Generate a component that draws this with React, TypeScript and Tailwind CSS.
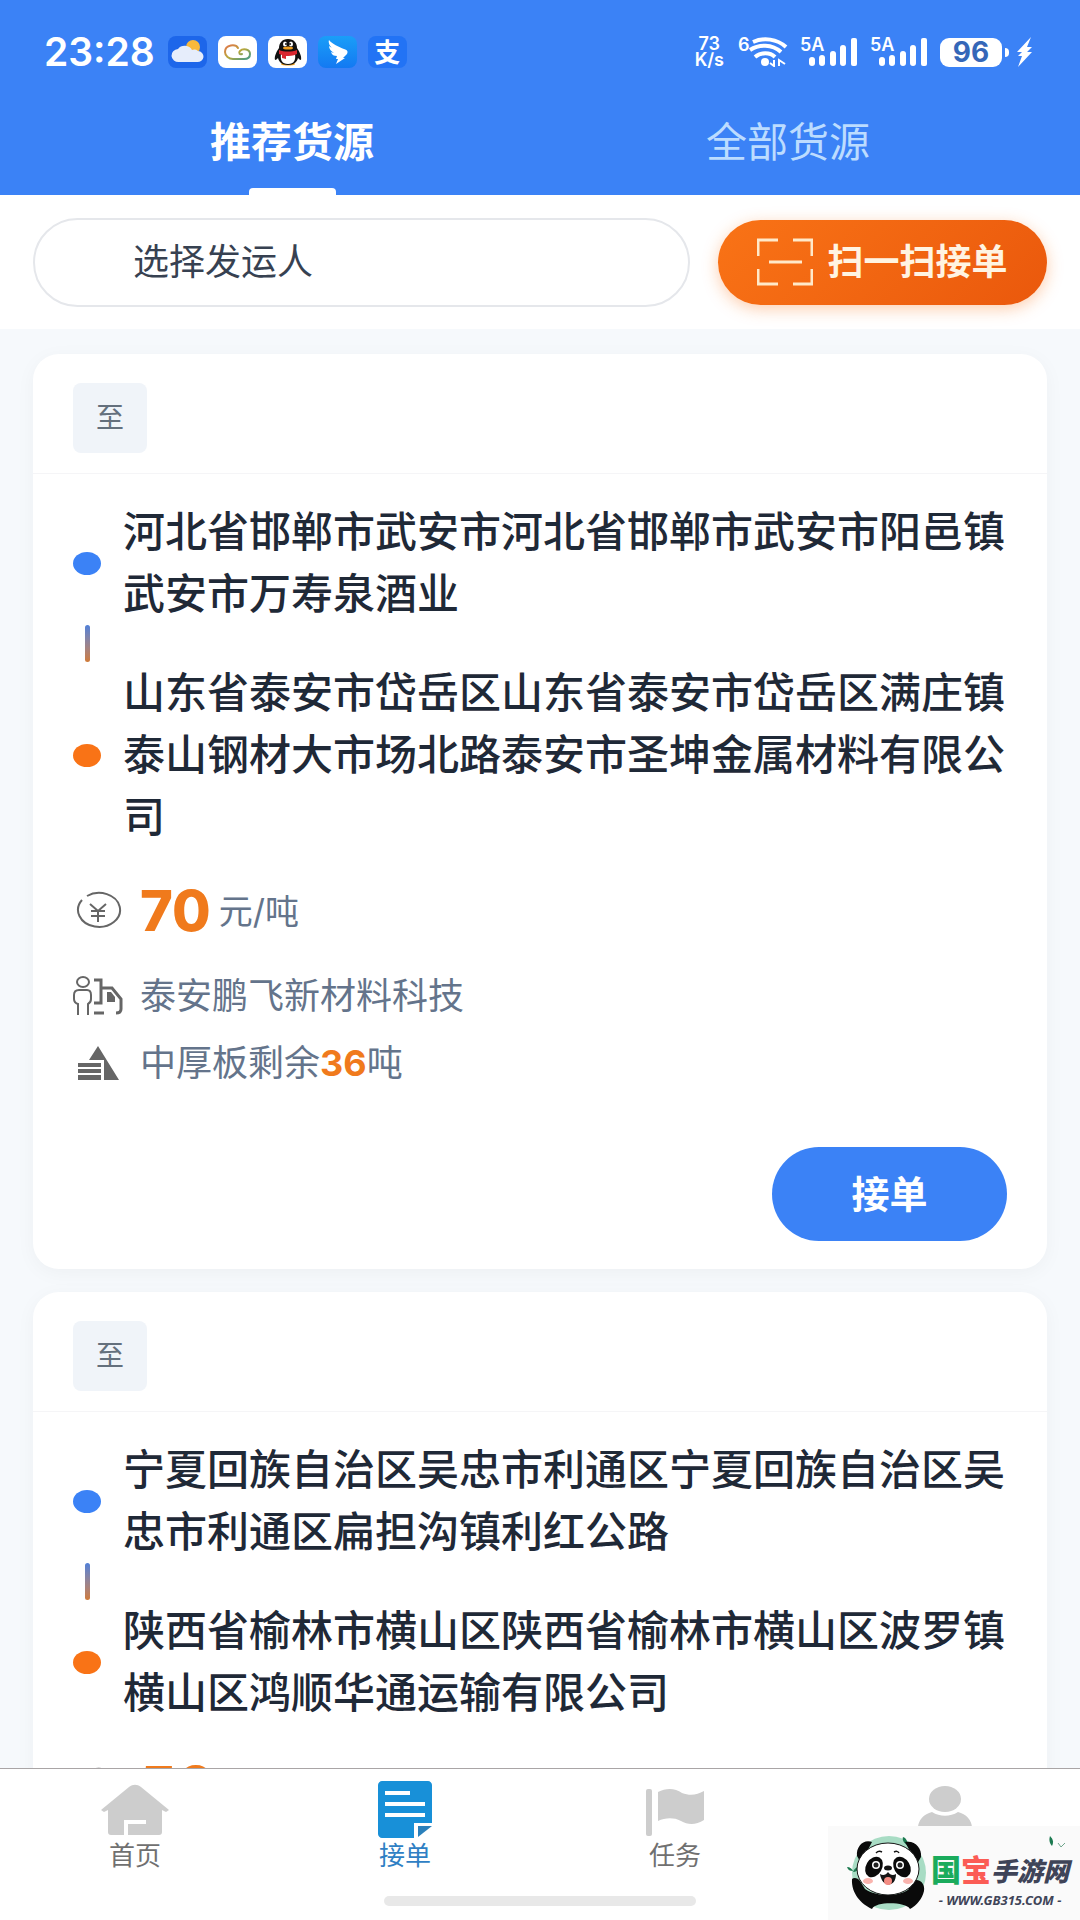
import type { ReactNode } from "react";

type Cargo = {
  id: number;
  from: string;
  to: string;
  price: number;
  company: string;
  goods: string;
  left: number;
};

const cargos: Cargo[] = [
  {
    id: 1,
    from: "河北省邯郸市武安市河北省邯郸市武安市阳邑镇武安市万寿泉酒业",
    to: "山东省泰安市岱岳区山东省泰安市岱岳区满庄镇泰山钢材大市场北路泰安市圣坤金属材料有限公司",
    price: 70,
    company: "泰安鹏飞新材料科技",
    goods: "中厚板",
    left: 36,
  },
  {
    id: 2,
    from: "宁夏回族自治区吴忠市利通区宁夏回族自治区吴忠市利通区扁担沟镇利红公路",
    to: "陕西省榆林市横山区陕西省榆林市横山区波罗镇横山区鸿顺华通运输有限公司",
    price: 50,
    company: "",
    goods: "",
    left: 0,
  },
];

/* ---------- status bar ---------- */

function WeatherIcon() {
  return (
    <svg width="39" height="32" viewBox="0 0 39 32">
      <rect width="39" height="32" rx="8" fill="#1d66ea" />
      <circle cx="25" cy="11" r="7" fill="#f8b93c" />
      <path d="M11 26a7 6.500 0 0 1-1-13 8 7 0 0 1 14 1 6 6 0 0 1 6 1 6 5.500 0 0 1-1 11z" fill="#e6edfb" />
    </svg>
  );
}

function CloudIcon() {
  return (
    <svg width="39" height="32" viewBox="0 0 39 32" fill="none">
      <defs>
        <linearGradient id="cloud" x1="0" y1="0" x2="1" y2="1">
          <stop offset="0" stopColor="#e0764a" />
          <stop offset="0.5" stopColor="#b9a83c" />
          <stop offset="1" stopColor="#3f9a8c" />
        </linearGradient>
      </defs>
      <rect width="39" height="32" rx="8" fill="#fff" />
      <path d="M20 12c-2-4-13-4-13 4 0 4 4 7 8 7h11c4 0 6-2 6-5 0-5-7-6-10-3-2 2 0 4 2 3" stroke="url(#cloud)" strokeWidth="2" strokeLinecap="round" />
    </svg>
  );
}

function PenguinIcon() {
  return (
    <svg width="39" height="32" viewBox="0 0 39 32">
      <rect width="39" height="32" rx="8" fill="#fff" />
      <path d="M13 28c0-2 14-2 14 0 0 2-14 2-14 0z" fill="#f0a020" />
      <path d="M20 3c-6 0-9 4-9 9-2 3-5 8-4 12 1 0 2-1 3-2 1 4 4 7 10 7s9-3 10-7c1 1 2 2 3 2 1-4-2-9-4-12 0-5-3-9-9-9z" fill="#111" />
      <path d="M13 18c-1 6 1 10 7 10s8-4 7-10z" fill="#fff" />
      <path d="M11 14c5 2 13 2 18 0v4c-4 2-8 2-11 2v3l-4-1v-3l-3-1z" fill="#d9262f" />
      <ellipse cx="17" cy="8" rx="2" ry="2.500" fill="#fff" />
      <ellipse cx="23" cy="8" rx="2" ry="2.500" fill="#fff" />
      <circle cx="18" cy="8" r="1" fill="#111" />
      <circle cx="22" cy="8" r="1" fill="#111" />
      <ellipse cx="20" cy="12" rx="5" ry="1.500" fill="#f0a020" />
    </svg>
  );
}

function WingIcon() {
  return (
    <svg width="39" height="32" viewBox="0 0 39 32">
      <defs>
        <linearGradient id="wing" x1="0" y1="0" x2="0" y2="1">
          <stop offset="0" stopColor="#1a9ef8" />
          <stop offset="1" stopColor="#1379f2" />
        </linearGradient>
      </defs>
      <rect width="39" height="32" rx="8" fill="url(#wing)" />
      <path d="M11 4c3 4 10 7 15 9 4 1 4 3 3 5l-4 4h2l-9 6 2-5h-2l1-3c-3 0-5-1-6-4l3 1c-3-2-5-4-5-7l3 2c-2-2-4-5-3-8z" fill="#fff" />
    </svg>
  );
}

function Wifi() {
  return (
    <span className="relative flex">
      <span className="absolute top-0 left-0 text-lg leading-4 font-semibold">6</span>
      <svg width="50" height="30" viewBox="0 0 50 30" fill="none" stroke="#fff" strokeWidth="4">
        <path d="M15 5c11-5 24-3 33 5" />
        <path d="M12 13c9-6 22-6 31 2" />
        <path d="M17 20c6-5 15-5 20 0" />
        <circle cx="27" cy="25" r="4" fill="#fff" stroke="none" />
        <path d="M36 23v6l-4-3M41 29v-6l6 4" strokeWidth="2" />
      </svg>
    </span>
  );
}

function Signal() {
  return (
    <span className="relative flex">
      <span className="absolute top-0 left-0 text-lg leading-4 font-semibold">5A</span>
      <svg width="58" height="30" viewBox="0 0 58 30" fill="#fff">
        <rect x="9" y="20" width="6" height="9" rx="3" />
        <rect x="19" y="18" width="6" height="11" rx="3" />
        <rect x="30" y="14" width="6" height="15" rx="3" />
        <rect x="40" y="8" width="6" height="21" rx="3" />
        <rect x="51" y="1" width="6" height="28" rx="2" />
      </svg>
    </span>
  );
}

function StatusBar() {
  return (
    <div className="flex h-[104px] items-center justify-between pl-11 pr-[46px] text-white">
      <div className="flex items-center gap-[11px]">
        <span className="mr-0.5 text-[39px] leading-10 font-semibold">23:28</span>
        <WeatherIcon />
        <CloudIcon />
        <PenguinIcon />
        <WingIcon />
        <span className="flex h-8 w-[39px] items-center justify-center rounded-lg bg-[#2273f5] text-[26px] font-bold">支</span>
      </div>
      <div className="flex items-center gap-3">
        <span className="mr-0.5 flex flex-col text-center text-lg leading-4 font-semibold">
          <span>73</span>
          <span>K/s</span>
        </span>
        <Wifi />
        <Signal />
        <Signal />
        <span className="flex items-center gap-[3px]">
          <span className="flex h-[29px] w-[62px] items-center justify-center rounded-[9px] bg-white text-[28px] font-bold text-[#3567b8]">96</span>
          <span className="h-[9px] w-1 rounded-r bg-white" />
          <svg className="ml-1" width="18" height="30" viewBox="0 0 18 30" fill="#fff">
            <path d="M15 0 1 15h5l-4 4h4L2 30l14-15h-5l5-5h-5z" />
          </svg>
        </span>
      </div>
    </div>
  );
}

/* ---------- card icons ---------- */

function YenIcon() {
  return (
    <svg width="50" height="42" viewBox="0 0 50 42" fill="none" stroke="#666" strokeWidth="2">
      <path d="M14 6a21 17 0 1 1-5 4" />
      <path d="m17 14 8 7 8-7M25 21v11M18 21h14M18 26h14" />
    </svg>
  );
}

function DriverIcon() {
  return (
    <svg width="50" height="42" viewBox="0 0 50 42" fill="none" stroke="#666" strokeWidth="2">
      <ellipse cx="10" cy="7" rx="6" ry="5" />
      <path d="M5 40V29c-3-1-4-2-4-5v-4c0-3 2-5 5-5h8c3 0 4 2 4 5v4c0 3-1 4-3 5v11" />
      <path d="M21 5h7v23h-7" strokeWidth="3" />
      <path d="M29 13h10l9 11v10c0 3-2 4-5 4M21 38h10" strokeWidth="3" />
      <path d="M34 17h4l4 5v5h-8z" fill="#666" stroke="none" />
    </svg>
  );
}

function GoodsIcon() {
  return (
    <svg width="50" height="42" viewBox="0 0 50 42" fill="#666">
      <path d="M25 4 46 38H31V18H16z" />
      <path d="M5 21h23v4H5zM5 27h23v4H5zM5 33h23v5H5z" />
    </svg>
  );
}

function ScanIcon() {
  return (
    <svg width="56" height="48" viewBox="0 0 56 48" fill="none" stroke="#ffe9c9" strokeWidth="3">
      <path d="M1 18V2h20M36 2h19v16M55 31v15H36M21 46H1V31M12 24h33" />
    </svg>
  );
}

/* ---------- cargo card ---------- */

function Stop({ text, dot }: { text: string; dot: string }) {
  return (
    <li className="flex items-center gap-[22px]">
      <span className={`h-[23px] w-7 shrink-0 rounded-[50%] ${dot}`} />
      <p className="flex-1 text-[42px] leading-[62px] font-medium break-all text-[#1f2937]">{text}</p>
    </li>
  );
}

function CargoCard({ cargo }: { cargo: Cargo }) {
  return (
    <article className="shrink-0 rounded-[26px] bg-white shadow-[0_4px_20px_rgba(0,0,0,0.04)]">
      <header className="flex border-b border-[#f5f5f7] px-10 pt-[29px] pb-5">
        <span className="flex h-[70px] w-[74px] items-center justify-center rounded-lg bg-[#f0f4f9] text-[28px] text-[#64707d]">至</span>
      </header>

      <div className="px-10 pt-[27px] pb-7">
        <ul className="-mr-2">
          <Stop text={cargo.from} dot="bg-[#3b82f6]" />
          <li className="flex w-7 justify-center">
            <span className="h-[37px] w-[5px] rounded-sm bg-linear-to-b from-[#4f7fd8] to-[#d07a35]" />
          </li>
          <Stop text={cargo.to} dot="bg-[#f97316]" />
        </ul>

        <div className="mt-[31px] flex h-16 items-center gap-[17px]">
          <YenIcon />
          <p className="flex items-center gap-2">
            <strong className="text-[56px] leading-16 font-extrabold text-[#f07a1c]">{cargo.price}</strong>
            <span className="text-[34px] text-[#64748b]">元/吨</span>
          </p>
        </div>

        <div className="mt-7 flex h-[50px] items-center gap-[17px] text-4xl text-[#64748b]">
          <DriverIcon />
          <span>{cargo.company}</span>
        </div>
        <div className="mt-[17px] flex h-[50px] items-center gap-[17px] text-4xl text-[#64748b]">
          <GoodsIcon />
          <span>
            {cargo.goods}剩余<strong className="font-bold text-[#f07a1c]">{cargo.left}</strong>吨
          </span>
        </div>

        <div className="mt-[59px] flex justify-end">
          <button className="h-[94px] w-[235px] rounded-full bg-[#3b82f6] text-[38px] font-bold text-white">接单</button>
        </div>
      </div>
    </article>
  );
}

/* ---------- bottom bar ---------- */

function NavItem({ label, active, children }: { label: string; active?: boolean; children: ReactNode }) {
  return (
    <a href="#" className="flex flex-1 flex-col items-center gap-px pt-3">
      {children}
      <span className={`text-[26px] leading-8 ${active ? "text-[#2f7fc4]" : "text-[#707070]"}`}>{label}</span>
    </a>
  );
}

function BottomNav() {
  return (
    <nav className="shrink-0 border-t border-[#a9a5a6] bg-white">
      <div className="flex">
        <NavItem label="首页">
          <svg width="68" height="58" viewBox="0 0 68 58" fill="#cdcdcd">
            <path d="M28 6c4-3 8-3 12 0l28 23-3 2-4-2v22c0 2-1 3-3 3H27V43h18v-4H23v15H10c-2 0-3-1-3-3V29l-4 2-3-2z" />
          </svg>
        </NavItem>
        <NavItem label="接单" active>
          <svg width="54" height="58" viewBox="0 0 54 58" fill="#1890d8">
            <path d="M4 0h46c2 0 4 2 4 4v38H36v15H4c-2 0-4-2-4-4V4c0-2 2-4 4-4z" />
            <path d="M40 45h14L40 56z" fill="#2b80bb" />
            <path d="M7 10h25v4H7zM7 21h40v4H7zM7 32h40v4H7z" fill="#fff" />
          </svg>
        </NavItem>
        <NavItem label="任务">
          <svg width="58" height="58" viewBox="0 0 58 58" fill="#cdcdcd">
            <rect x="0" y="8" width="6" height="47" rx="2" />
            <path d="M12 11c8-4 17-4 24 1 8 3 15 2 22-2v29c-8 5-16 5-23 1-8-4-16-3-23 0z" />
          </svg>
        </NavItem>
        <a href="#" aria-label="我的" className="flex flex-1 flex-col items-center pt-3">
          <svg width="54" height="58" viewBox="0 0 54 58" fill="#cdcdcd">
            <ellipse cx="27" cy="18" rx="16" ry="13" />
            <path d="M14 31c8 5 18 5 26 0 8 2 14 8 14 16v8H0v-8c0-8 6-14 14-16z" />
          </svg>
        </a>
      </div>
      <div className="flex justify-center pt-6 pb-3.5">
        <span className="h-2.5 w-[312px] rounded-full bg-[#e8e8e8]" />
      </div>
    </nav>
  );
}

function Panda() {
  return (
    <svg className="shrink-0" width="80" height="76" viewBox="0 0 80 76">
      <circle cx="42" cy="38" r="37" fill="#a8dcc4" />
      <path d="M56 2c3 1 5 4 4 8-3-2-5-5-4-8zM0 32c3 0 5 2 6 4-3 0-5-1-6-4zM6 37c1-3 3-5 6-5-1 3-3 5-6 5z" fill="#1c7a50" />
      <path d="M5 44c2-2 6-1 8 2l5 8c12 8 34 8 44 0 0-5 3-9 8-9 5 1 8 5 7 11-2 8-7 14-14 18-4-7-34-8-38 0C14 69 4 58 5 44z" fill="#0a0a0a" />
      <path d="M10 21C9 12 16 4 25 7L14 28zM74 22C75 13 68 5 58 7l12 22z" fill="#0a0a0a" />
      <ellipse cx="41" cy="34" rx="31" ry="26" fill="#fff" stroke="#151515" />
      <ellipse cx="27" cy="32" rx="8" ry="11" transform="rotate(30 27 32)" fill="#0a0a0a" />
      <ellipse cx="55" cy="32" rx="8" ry="11" transform="rotate(-30 55 32)" fill="#0a0a0a" />
      <circle cx="29" cy="30" r="4" fill="#fff" />
      <circle cx="53" cy="30" r="4" fill="#fff" />
      <circle cx="29" cy="30" r="2.500" fill="#222" />
      <circle cx="53" cy="30" r="2.500" fill="#222" />
      <path d="M29 18c2-2 4-2 6-1M47 17c2-1 4-1 5 1" stroke="#151515" strokeWidth="1.500" fill="none" />
      <ellipse cx="41" cy="33" rx="4" ry="2.500" fill="#151515" />
      <path d="M33 39c3 2 6 1 8-2 2 3 5 4 8 2 0 14-14 14-16 0z" fill="#151515" />
      <ellipse cx="41" cy="46" rx="4" ry="4" fill="#f28b82" />
      <ellipse cx="21" cy="46" rx="5" ry="3" fill="#f9b4ae" />
      <ellipse cx="61" cy="46" rx="5" ry="3" fill="#f9b4ae" />
    </svg>
  );
}

function SiteBadge() {
  return (
    <div className="absolute right-0 bottom-0 flex h-[94px] w-[252px] items-center bg-[#fafafa] pl-[19px]">
      <Panda />
      <div className="relative ml-1 flex flex-col items-center pt-4">
        <svg className="absolute top-0 right-1" width="16" height="12" viewBox="0 0 16 12">
          <path d="M1 0c3 3 4 6 2 10C0 7 0 3 1 0z" fill="#1c7a50" />
          <path d="M9 7l3 4 4-4" stroke="#6fa58c" fill="none" />
        </svg>
        <p className="flex items-baseline leading-9 font-black whitespace-nowrap">
          <span className="text-[30px] text-[#1aab5c]">国</span>
          <span className="text-[30px] text-[#fb5c55]">宝</span>
          <span className="text-[26px] text-[#3f4458] italic">手游网</span>
        </p>
        <p className="font-['Noto_Sans',sans-serif] text-[13px] leading-5 font-bold whitespace-nowrap text-[#3f4458] italic">- WWW.GB315.COM -</p>
      </div>
    </div>
  );
}

export default function App() {
  return (
    <div className="relative flex h-screen flex-col overflow-hidden bg-[#f6f9fc] font-['Inter','Noto_Sans_CJK_SC',sans-serif]">
      <div className="shrink-0 bg-[#3b82f6]">
        <StatusBar />
        <div className="flex h-[91px] px-11">
          <button className="flex flex-1 flex-col items-center justify-between text-[41px] font-bold text-white">
            <span className="leading-[76px]">推荐货源</span>
            <span className="h-[7px] w-[87px] rounded-t bg-white" />
          </button>
          <button className="flex flex-1 flex-col items-center text-[41px] text-[#bcdcff]">
            <span className="leading-[76px]">全部货源</span>
          </button>
        </div>
      </div>

      <div className="flex h-[134px] shrink-0 items-center gap-7 bg-white px-[33px]">
        <select aria-label="选择发运人" className="h-[89px] min-w-0 flex-1 appearance-none rounded-full border-2 border-[#e5e7eb] bg-white pl-[98px] text-4xl text-[#374151]">
          <option>选择发运人</option>
        </select>
        <button className="flex h-[85px] w-[329px] items-center justify-center gap-3.5 rounded-full bg-linear-135 from-[#f97316] to-[#ea580c] text-4xl font-bold text-[#fff4e2] shadow-[0_4px_16px_rgba(249,115,22,0.35)]">
          <ScanIcon />
          扫一扫接单
        </button>
      </div>

      <main className="flex min-h-0 flex-1 flex-col gap-[23px] overflow-hidden px-[33px] pt-[25px]">
        {cargos.map((cargo) => (
          <CargoCard key={cargo.id} cargo={cargo} />
        ))}
      </main>

      <BottomNav />
      <SiteBadge />
    </div>
  );
}
